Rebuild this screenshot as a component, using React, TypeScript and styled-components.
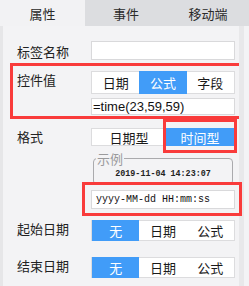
import React from 'react';
import styled, { createGlobalStyle } from 'styled-components';

const GlobalStyle = createGlobalStyle`
  html, body {
    margin: 0;
    padding: 0;
    background: #f3f3f5;
  }
  * {
    box-sizing: border-box;
  }
`;

const cjk = `'Noto Sans CJK SC', 'Liberation Sans', sans-serif`;
const red = '#f93b3b';
const blue = '#419cf8';

const StyledPanel = styled.div`
  width: 249px;
  height: 286px;
  display: flex;
  flex-direction: column;
  overflow: hidden;
  background: #f3f3f5;
  font-family: ${cjk};
  font-size: 13px;
  color: #222;
`;

const StyledTabs = styled.div`
  display: flex;
  height: 26px;
  flex-shrink: 0;
`;

const StyledTab = styled.div<{ $active?: boolean; $w: number }>`
  width: ${({ $w }) => $w}px;
  display: flex;
  align-items: center;
  justify-content: center;
  background: ${({ $active }) => ($active ? '#f2f2f4' : '#dcdde0')};
  color: #2a2a2a;
`;

const StyledBody = styled.div`
  flex: 1;
  display: flex;
  border-left: 3px solid #e6e6e8;
`;

const StyledForm = styled.div`
  flex: 1;
  padding: 15px 0 0 14px;
  display: flex;
  flex-direction: column;
`;

const StyledTrack = styled.div`
  width: 5px;
  margin-right: 5px;
  background: #e8e8ea;
`;

const StyledRow = styled.div<{ $top?: number }>`
  display: flex;
  align-items: flex-start;
  margin-top: ${({ $top }) => $top ?? 0}px;
`;

const StyledLabel = styled.div<{ $pad?: number }>`
  width: 74px;
  flex-shrink: 0;
  line-height: 18px;
  padding-top: ${({ $pad }) => $pad ?? 0}px;
  white-space: nowrap;
`;

const StyledControls = styled.div`
  width: 144px;
  display: flex;
  flex-direction: column;
  gap: 4px;
`;

const StyledGroup = styled.div`
  margin: 2px -4px 0 -7px;
  border: 3px solid ${red};
  padding: 5px 0 1px 4px;
`;

const StyledInput = styled.div<{ $h: number; $mono?: boolean }>`
  position: relative;
  width: 144px;
  height: ${({ $h }) => $h}px;
  background: #fff;
  border: 1px solid #d9d9db;
  display: flex;
  align-items: center;
  padding-left: ${({ $mono }) => ($mono ? 4 : 1)}px;
  font-family: ${({ $mono }) =>
    $mono ? `'Liberation Mono', monospace` : `'Liberation Sans', Arial, sans-serif`};
  font-size: ${({ $mono }) => ($mono ? 10 : 13)}px;
  color: #111;
  white-space: nowrap;
`;

const StyledSegmented = styled.div<{ $h: number }>`
  display: flex;
  width: 144px;
  height: ${({ $h }) => $h}px;
  background: #fff;
  border: 1px solid #dcdcde;
`;

const StyledSegment = styled.div<{ $active?: boolean; $w?: number }>`
  position: relative;
  ${({ $w }) => ($w ? `width: ${$w}px; flex-shrink: 0;` : 'flex: 1;')}
  margin: -1px 0;
  display: flex;
  align-items: center;
  justify-content: center;
  background: ${({ $active }) => ($active ? blue : 'transparent')};
  color: ${({ $active }) => ($active ? '#fff' : '#1a1a1a')};
`;

const StyledHighlight = styled.div<{ $inset: string }>`
  position: absolute;
  inset: ${({ $inset }) => $inset};
  border: 3px solid ${red};
  pointer-events: none;
`;

const StyledSample = styled.fieldset`
  width: 140px;
  margin: 6px 0 0 2px;
  padding: 4px 0 5px;
  border: 1px solid #aaaaad;
  border-radius: 4px;
  text-align: center;
  font-family: 'Liberation Mono', monospace;
  font-size: 8.4px;
  font-weight: bold;
  line-height: 10px;
  color: #222;

  legend {
    margin-left: 2px;
    padding: 0 1px;
    font-family: ${cjk};
    font-size: 13px;
    font-weight: normal;
    line-height: 13px;
    color: #9a9a9c;
    text-align: left;
  }
`;

const Segmented: React.FC<{ items: string[]; active: number; h: number }> = ({
  items,
  active,
  h,
}) => (
  <StyledSegmented $h={h}>
    {items.map((item, i) => (
      <StyledSegment key={item} $active={i === active}>
        {item}
      </StyledSegment>
    ))}
  </StyledSegmented>
);

export default function App(): JSX.Element {
  return (
    <StyledPanel>
      <GlobalStyle />
      <StyledTabs>
        <StyledTab $active $w={85}>属性</StyledTab>
        <StyledTab $w={82}>事件</StyledTab>
        <StyledTab $w={82}>移动端</StyledTab>
      </StyledTabs>
      <StyledBody>
        <StyledForm>
          <StyledRow>
            <StyledLabel $pad={2}>标签名称</StyledLabel>
            <StyledInput $h={19} />
          </StyledRow>

          <StyledGroup>
            <StyledRow>
              <StyledLabel>控件值</StyledLabel>
              <StyledControls>
                <Segmented items={['日期', '公式', '字段']} active={1} h={23} />
                <StyledInput $h={17}>=time(23,59,59)</StyledInput>
              </StyledControls>
            </StyledRow>
          </StyledGroup>

          <StyledRow $top={9}>
            <StyledLabel>格式</StyledLabel>
            <StyledControls>
              <StyledSegmented $h={18}>
                <StyledSegment $w={74}>日期型</StyledSegment>
                <StyledSegment $active>
                  时间型
                  <StyledHighlight $inset="-9px -3px -7px -3px" />
                </StyledSegment>
              </StyledSegmented>
            </StyledControls>
          </StyledRow>

          <StyledRow>
            <StyledLabel />
            <StyledSample>
              <legend>示例</legend>
              2019-11-04 14:23:07
            </StyledSample>
          </StyledRow>

          <StyledRow $top={5}>
            <StyledLabel />
            <StyledInput $h={19} $mono>
              yyyy-MM-dd HH:mm:ss
              <StyledHighlight $inset="-9px -8px -8px -10px" />
            </StyledInput>
          </StyledRow>

          <StyledRow $top={11}>
            <StyledLabel>起始日期</StyledLabel>
            <Segmented items={['无', '日期', '公式']} active={0} h={21} />
          </StyledRow>

          <StyledRow $top={16}>
            <StyledLabel>结束日期</StyledLabel>
            <Segmented items={['无', '日期', '公式']} active={0} h={21} />
          </StyledRow>
        </StyledForm>
        <StyledTrack />
      </StyledBody>
    </StyledPanel>
  );
}
